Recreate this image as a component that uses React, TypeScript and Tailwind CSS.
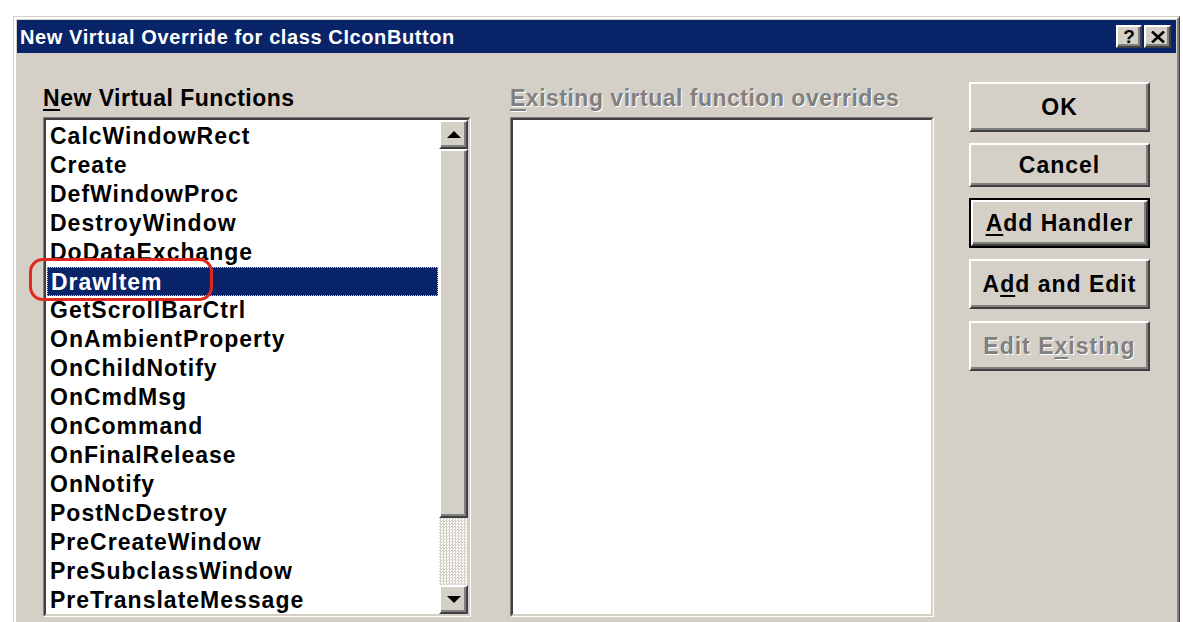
import React from "react";

const items = [
  "CalcWindowRect",
  "Create",
  "DefWindowProc",
  "DestroyWindow",
  "DoDataExchange",
  "DrawItem",
  "GetScrollBarCtrl",
  "OnAmbientProperty",
  "OnChildNotify",
  "OnCmdMsg",
  "OnCommand",
  "OnFinalRelease",
  "OnNotify",
  "PostNcDestroy",
  "PreCreateWindow",
  "PreSubclassWindow",
  "PreTranslateMessage",
];

function Arrow({ up }: { up: boolean }) {
  return (
    <svg width="14" height="8" viewBox="0 0 14 8">
      {up ? <polygon points="0,7 7,0 14,7" fill="#000" /> : <polygon points="0,0 14,0 7,7" fill="#000" />}
    </svg>
  );
}

function RaisedBox({ className, children }: { className?: string; children?: React.ReactNode }) {
  return (
    <div
      className={
        "border-2 border-t-white border-l-white border-r-[#404040] border-b-[#404040] bg-[#d4d0c8] shadow-[inset_-2px_-2px_0_#808080] " +
        (className ?? "")
      }
    >
      {children}
    </div>
  );
}

function Button({
  children,
  h,
  isDefault,
  disabled,
}: {
  children: React.ReactNode;
  h: string;
  isDefault?: boolean;
  disabled?: boolean;
}) {
  const inner = (
    <RaisedBox className="flex h-full w-full items-center justify-center">
      <span
        className={
          disabled
            ? "text-[#808080] [text-shadow:1px_1px_0_#ffffff]"
            : "text-black"
        }
      >
        {children}
      </span>
    </RaisedBox>
  );
  if (isDefault) {
    return <div className={"w-[181px] border-2 border-black " + h}>{inner}</div>;
  }
  return <div className={"w-[181px] " + h}>{inner}</div>;
}

export default function App() {
  return (
    <div className="h-[622px] w-[1183px] overflow-hidden bg-white font-['Liberation_Sans',Arial,sans-serif]">
      <div className="ml-[13px] mt-[16px] h-[700px] w-[1167px] border border-t-[#d4d0c8] border-l-[#d4d0c8] border-r-[#404040] border-b-[#404040]">
        <div className="flex h-full flex-col border-2 border-t-white border-l-white border-r-[#808080] border-b-[#808080] bg-[#d4d0c8] p-px">
          {/* Title bar */}
          <div className="flex h-[33px] items-center justify-between bg-[#0a246a] pl-[3px] pr-[5px]">
            <span className="text-[20px] font-bold tracking-[0.6px] text-white">
              New Virtual Override for class CIconButton
            </span>
            <div className="flex gap-[2px]">
              <RaisedBox className="flex h-[23px] w-[26px] items-center justify-center">
                <span className="text-[19px] font-bold leading-none text-black">?</span>
              </RaisedBox>
              <RaisedBox className="flex h-[23px] w-[27px] items-center justify-center">
                <svg width="14" height="12" viewBox="0 0 14 12">
                  <path d="M1 0.5 L13 11.5 M13 0.5 L1 11.5" stroke="#000" strokeWidth="2.6" />
                </svg>
              </RaisedBox>
            </div>
          </div>

          {/* Body */}
          <div className="flex pl-[26px] pt-[29px] text-[23px] font-bold tracking-[1px]">
            {/* Left column */}
            <div className="flex w-[428px] flex-col">
              <div className="h-[32px] leading-[32px] tracking-[0.5px] text-black">
                <span className="underline decoration-2 underline-offset-[3px]">N</span>ew Virtual Functions
              </div>
              <div className="relative mt-[3px] h-[500px] border border-t-[#808080] border-l-[#808080] border-r-white border-b-white">
                <div className="flex h-full border-2 border-t-[#404040] border-l-[#404040] border-r-[#d4d0c8] border-b-[#d4d0c8] bg-white">
                  <div className="flex-1 px-px pt-[2px]">
                    {items.map((it, i) => (
                      <div
                        key={it}
                        className={
                          "h-[29px] pl-[3px] leading-[29px] whitespace-nowrap " +
                          (i === 5
                            ? "border border-dotted border-[#c8c8a0] bg-[#0a246a] pl-[2px] leading-[27px] text-white"
                            : "text-black")
                        }
                      >
                        {it}
                      </div>
                    ))}
                  </div>
                  {/* Scrollbar */}
                  <div className="flex w-[29px] flex-col">
                    <RaisedBox className="flex h-[29px] items-center justify-center">
                      <Arrow up />
                    </RaisedBox>
                    <RaisedBox className="h-[369px]" />
                    <div className="h-[67px] bg-[repeating-conic-gradient(#d4d0c8_0%_25%,#ffffff_0%_50%)] bg-[length:3px_3px]" />
                    <RaisedBox className="flex h-[29px] items-center justify-center">
                      <Arrow up={false} />
                    </RaisedBox>
                  </div>
                </div>
                {/* Red annotation */}
                <div className="pointer-events-none absolute left-[-15px] top-[140px] h-[43px] w-[184px] rounded-[14px] border-[3px] border-[#e0281e]" />
              </div>
            </div>

            {/* Middle column */}
            <div className="ml-[39px] flex w-[424px] flex-col">
              <div className="h-[32px] leading-[32px] tracking-[0.5px] text-[#808080] [text-shadow:1px_1px_0_#ffffff]">
                <span className="underline decoration-2 underline-offset-[3px]">E</span>xisting virtual function overrides
              </div>
              <div className="mt-[3px] h-[500px] border border-t-[#808080] border-l-[#808080] border-r-white border-b-white">
                <div className="h-full border-2 border-t-[#404040] border-l-[#404040] border-r-[#d4d0c8] border-b-[#d4d0c8] bg-white" />
              </div>
            </div>

            {/* Buttons */}
            <div className="ml-[35px] flex flex-col">
              <Button h="h-[50px]">OK</Button>
              <div className="mt-[11px]">
                <Button h="h-[44px]">Cancel</Button>
              </div>
              <div className="mt-[11px]">
                <Button h="h-[50px]" isDefault>
                  <span className="underline decoration-2 underline-offset-[3px]">A</span>dd Handler
                </Button>
              </div>
              <div className="mt-[11px]">
                <Button h="h-[50px]">
                  A<span className="underline decoration-2 underline-offset-[3px]">d</span>d and Edit
                </Button>
              </div>
              <div className="mt-[12px]">
                <Button h="h-[50px]" disabled>
                  Edit E<span className="underline decoration-2 underline-offset-[3px]">x</span>isting
                </Button>
              </div>
            </div>
          </div>
        </div>
      </div>
    </div>
  );
}
